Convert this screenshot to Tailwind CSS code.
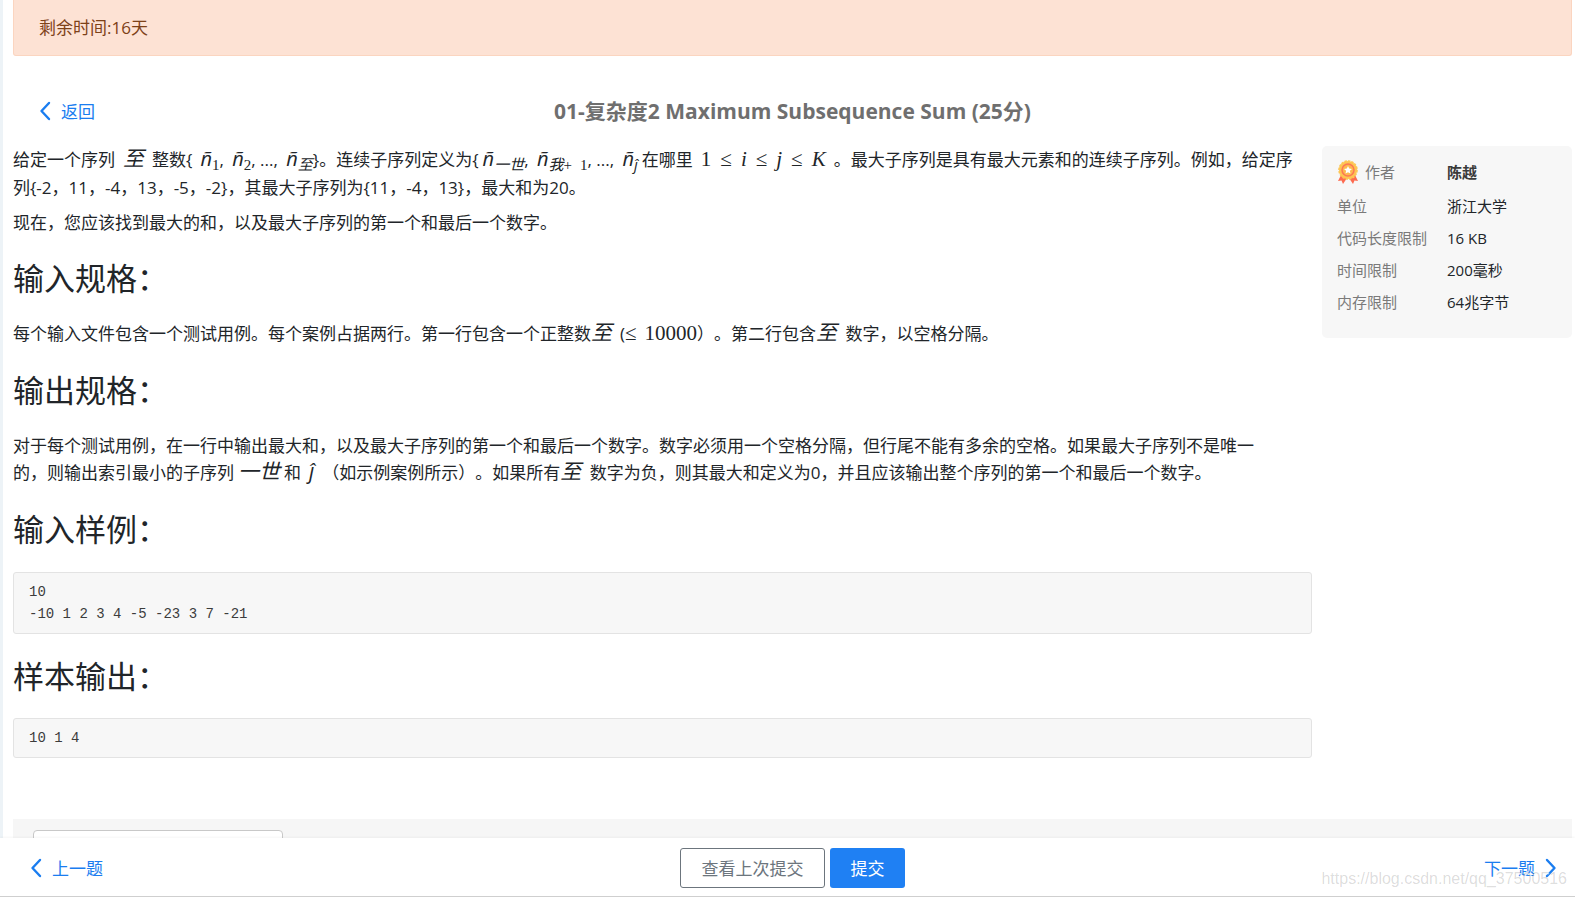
<!DOCTYPE html>
<html lang="zh-CN">
<head>
<meta charset="utf-8">
<meta name="viewport" content="width=device-width, initial-scale=1">
<title>01-复杂度2 Maximum Subsequence Sum</title>
<script src="https://cdn.jsdelivr.net/npm/@tailwindcss/browser@4"></script>
</head>
<body class="h-screen overflow-hidden flex flex-col bg-white text-[17px] leading-[27px] text-[#212529] [text-spacing-trim:space-all] font-['Open_Sans','Noto_Sans_CJK_SC',sans-serif]">
<main class="flex-1 min-h-0 overflow-hidden border-l-[3px] border-[#edf3f7] pl-[10px] pr-[3px]">
  <div role="alert" class="h-14 flex items-center rounded-b-[3px] border border-t-0 border-[#fbd5c0] bg-[#fde2d4] px-[25px] text-[#7d4118]">剩余时间:16天</div>

  <header class="mt-[40px] h-[30px] grid grid-cols-[1fr_auto_1fr] items-center px-[26px]">
    <a href="#" class="flex items-center gap-[10px] text-[#1a7df0]">
      <svg class="w-3 h-5" viewBox="0 0 12 20" fill="none" stroke="currentColor" stroke-width="2.4" stroke-linecap="round" stroke-linejoin="round"><path d="M10 2 2.5 10 10 18"/></svg>返回</a>
    <h1 class="text-[21px] font-bold text-[#6f6f6f] font-['Open_Sans','Noto_Sans_CJK_SC',sans-serif]">01-复杂度2 Maximum Subsequence Sum (25分)</h1>
  </header>

  <div class="mt-[20px] flex items-start gap-[10px]">
    <article class="flex-1 min-w-0 whitespace-nowrap">
      <p class="leading-7">给定一个序列<i class="mx-2 text-[21px] leading-none">至</i>整数{<i class="ml-2 text-[20px] leading-none">ñ</i><sub class="text-[15px] leading-none font-['Liberation_Serif',serif]">1</sub>, <i class="ml-1 text-[20px] leading-none">ñ</i><sub class="text-[15px] leading-none font-['Liberation_Serif',serif]">2</sub>, ..., <i class="ml-1 text-[20px] leading-none">ñ</i><sub class="text-[15px] leading-none italic">至</sub>}。连续子序列定义为{<i class="ml-1 text-[20px] leading-none">ñ</i><sub class="text-[15px] leading-none italic">一世</sub>, <i class="ml-1 text-[20px] leading-none">ñ</i><sub class="text-[15px] leading-none"><i>我</i><span class="font-['Liberation_Serif',serif]">+<span class="ml-2">1</span></span></sub>, ..., <i class="ml-1 text-[20px] leading-none">ñ</i><sub class="mr-1 text-[15px] leading-none italic">ĵ</sub>在哪里<span class="mx-2 inline-flex items-baseline gap-[9px] text-[21px] leading-none font-['Liberation_Serif',serif]"><span>1</span><span>≤</span><i>i</i><span>≤</span><i>j</i><span>≤</span><i>K</i></span>。最大子序列是具有最大元素和的连续子序列。例如，给定序<br>列{-2，11，-4，13，-5，-2}，其最大子序列为{11，-4，13}，最大和为20。</p>
      <p class="mt-[7px]">现在，您应该找到最大的和，以及最大子序列的第一个和最后一个数字。</p>

      <h2 class="mt-6 mb-[23px] text-[31px] leading-[37px]">输入规格：</h2>
      <p>每个输入文件包含一个测试用例。每个案例占据两行。第一行包含一个正整数<i class="mr-2 text-[21px] leading-none">至</i>(<span class="inline-flex items-baseline gap-2 text-[21px] leading-none font-['Liberation_Serif',serif]"><span>≤</span><span>10000</span></span>）。第二行包含<i class="mr-1 text-[21px] leading-none">至</i> 数字，以空格分隔。</p>

      <h2 class="mt-[25px] mb-[23px] text-[31px] leading-[37px]">输出规格：</h2>
      <p>对于每个测试用例，在一行中输出最大和，以及最大子序列的第一个和最后一个数字。数字必须用一个空格分隔，但行尾不能有多余的空格。如果最大子序列不是唯一<br>的，则输出索引最小的子序列<i class="mx-1 text-[21px] leading-none">一世</i>和<i class="mx-2 text-[21px] leading-none">ĵ</i>（如示例案例所示）。如果所有<i class="mr-1 text-[21px] leading-none">至</i> 数字为负，则其最大和定义为0，并且应该输出整个序列的第一个和最后一个数字。</p>

      <h2 class="mt-[25px] mb-6 text-[31px] leading-[37px]">输入样例：</h2>
      <pre class="rounded-[3px] border border-[#e3e3e3] bg-[#f7f7f7] px-[15px] py-2 text-[14px] leading-[22px] text-[#3c3c3c] font-['Liberation_Mono',monospace]">10
-10 1 2 3 4 -5 -23 3 7 -21</pre>

      <h2 class="mt-6 mb-[23px] text-[31px] leading-[37px]">样本输出：</h2>
      <pre class="rounded-[3px] border border-[#e3e3e3] bg-[#f7f7f7] px-[15px] py-2 text-[14px] leading-[22px] text-[#3c3c3c] font-['Liberation_Mono',monospace]">10 1 4</pre>
    </article>

    <aside class="w-[250px] h-[192px] shrink-0 rounded-[5px] bg-[#f7f7f7] px-[15px] pt-[10px] text-[15px] leading-8">
      <dl class="grid grid-cols-[110px_1fr]">
        <dt class="mb-[2px] flex items-center gap-[6px] text-[#7a7a7a]">
          <svg class="w-[22px] h-6" viewBox="0 0 22 24"><path d="M4 15 1 21l3.500-.5L6 24l4-6zM18 15l3 6-3.500-.5L16 24l-4-6z" fill="#fd6b50"/><circle cx="11" cy="10" r="9" fill="#fdc552" stroke="#fdc552" stroke-width="1.600" stroke-dasharray="2.500 1"/><circle cx="11" cy="10" r="6" fill="#fdb84e" stroke="#fd7655" stroke-width="1.500"/><path d="m11 6 1.200 2.600 2.800.3-2.100 1.900.6 2.800-2.500-1.400-2.500 1.400.6-2.800L7 8.900l2.800-.3z" fill="#fff"/></svg>作者</dt>
        <dd class="font-bold text-[#3a3a3a]">陈越</dd>
        <dt class="text-[#7a7a7a]">单位</dt><dd>浙江大学</dd>
        <dt class="text-[#7a7a7a]">代码长度限制</dt><dd>16 KB</dd>
        <dt class="text-[#7a7a7a]">时间限制</dt><dd>200毫秒</dd>
        <dt class="text-[#7a7a7a]">内存限制</dt><dd>64兆字节</dd>
      </dl>
    </aside>
  </div>

  <div class="mt-[61px] h-[80px] bg-[#f6f6f6] px-5 pt-[11px]">
    <select aria-label="编译器" class="block w-[250px] h-[40px] appearance-none rounded-[4px] border border-[#c8c8c8] bg-white"></select>
  </div>
</main>

<footer class="relative h-[59px] shrink-0 grid grid-cols-[1fr_auto_1fr] items-center border-b border-[#cfcfcf] bg-white pl-[28px] pr-[18px] pt-[2px] shadow-[0_-1px_2px_rgba(0,0,0,0.04)]">
  <a href="#" class="flex items-center gap-[10px] pl-[2px] text-[#1a7df0]">
    <svg class="w-3 h-5" viewBox="0 0 12 20" fill="none" stroke="currentColor" stroke-width="2.4" stroke-linecap="round" stroke-linejoin="round"><path d="M10 2 2.5 10 10 18"/></svg>上一题</a>
  <div class="flex gap-[5px]">
    <button type="button" class="w-[145px] h-10 rounded-[3px] border border-[#6c757d] text-[#6c757d]">查看上次提交</button>
    <button type="button" class="w-[75px] h-10 rounded-[3px] bg-[#1f80f3] text-white">提交</button>
  </div>
  <a href="#" class="flex items-center justify-end gap-[10px] text-[#1a7df0]">下一题
    <svg class="w-3 h-5" viewBox="0 0 12 20" fill="none" stroke="currentColor" stroke-width="2.4" stroke-linecap="round" stroke-linejoin="round"><path d="M2 2 9.500 10 2 18"/></svg></a>
  <span class="pointer-events-none absolute right-[8px] bottom-[5px] text-[16px] leading-6 text-black/15 [text-shadow:1px_1px_1px_#fff] font-['Liberation_Sans',sans-serif]">https://blog.csdn.net/qq_37500516</span>
</footer>
</body>
</html>
